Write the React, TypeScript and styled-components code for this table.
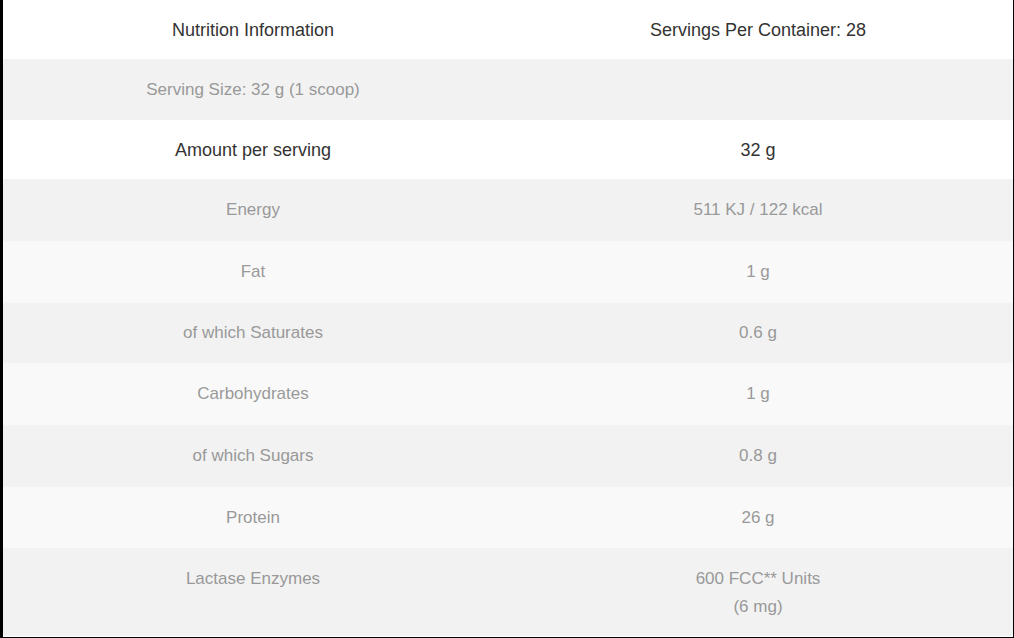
import React from "react";
import styled, { createGlobalStyle } from "styled-components";

const Global = createGlobalStyle`
  html, body { margin: 0; padding: 0; background: #ffffff; }
  body { font-family: "Liberation Sans", Arial, sans-serif; }
`;

const Frame = styled.div`
  box-sizing: border-box;
  width: 1014px;
  height: 638px;
  border-left: 3px solid #000;
  border-right: 1px solid #000;
  border-bottom: 1px solid #000;
  overflow: hidden;
`;

const Table = styled.table`
  width: 100%;
  border-collapse: collapse;
  table-layout: fixed;
  font-size: 17px;
  line-height: 28px;
`;

type Tone = "white" | "gray" | "light";

const Row = styled.tr<{ $tone: Tone; $h: number }>`
  height: ${(p) => p.$h}px;
  background: ${(p) =>
    p.$tone === "white" ? "#ffffff" : p.$tone === "gray" ? "#f2f2f2" : "#f9f9f9"};
`;

const Cell = styled.td<{ $strong?: boolean }>`
  padding: 0 5px 0 0;
  text-align: center;
  vertical-align: middle;
  font-size: ${(p) => (p.$strong ? "18px" : "17px")};
  color: ${(p) => (p.$strong ? "#333333" : "#999999")};
`;

const TopCell = styled(Cell)`
  vertical-align: top;
  padding-top: 17px;
`;

type Item = { label: string; value: string; tone: Tone; h: number };

const items: Item[] = [
  { label: "Energy", value: "511 KJ / 122 kcal", tone: "gray", h: 62 },
  { label: "Fat", value: "1 g", tone: "light", h: 62 },
  { label: "of which Saturates", value: "0.6 g", tone: "gray", h: 60 },
  { label: "Carbohydrates", value: "1 g", tone: "light", h: 62 },
  { label: "of which Sugars", value: "0.8 g", tone: "gray", h: 62 },
  { label: "Protein", value: "26 g", tone: "light", h: 61 },
];

export default function App() {
  return (
    <>
      <Global />
      <Frame>
        <Table>
          <tbody>
            <Row $tone="white" $h={59}>
              <Cell $strong>Nutrition Information</Cell>
              <Cell $strong>Servings Per Container: 28</Cell>
            </Row>
            <Row $tone="gray" $h={61}>
              <Cell>Serving Size: 32 g (1 scoop)</Cell>
              <Cell></Cell>
            </Row>
            <Row $tone="white" $h={59}>
              <Cell $strong>Amount per serving</Cell>
              <Cell $strong>32 g</Cell>
            </Row>
            {items.map((it) => (
              <Row key={it.label} $tone={it.tone} $h={it.h}>
                <Cell>{it.label}</Cell>
                <Cell>{it.value}</Cell>
              </Row>
            ))}
            <Row $tone="gray" $h={88}>
              <TopCell>Lactase Enzymes</TopCell>
              <TopCell>
                600 FCC** Units
                <br />
                (6 mg)
              </TopCell>
            </Row>
          </tbody>
        </Table>
      </Frame>
    </>
  );
}
